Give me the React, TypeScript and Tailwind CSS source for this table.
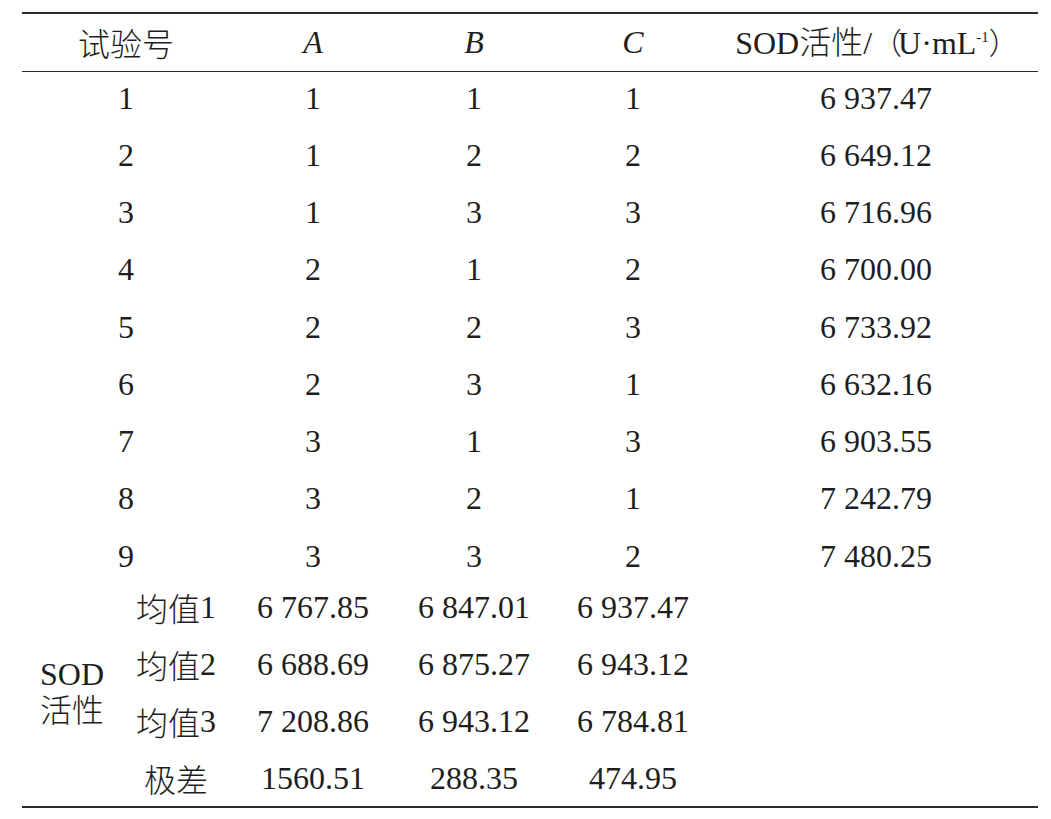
import React from "react";

const rows = [
  ["1", "1", "1", "1", "6\u0020937.47"],
  ["2", "1", "2", "2", "6\u0020649.12"],
  ["3", "1", "3", "3", "6\u0020716.96"],
  ["4", "2", "1", "2", "6\u0020700.00"],
  ["5", "2", "2", "3", "6\u0020733.92"],
  ["6", "2", "3", "1", "6\u0020632.16"],
  ["7", "3", "1", "3", "6\u0020903.55"],
  ["8", "3", "2", "1", "7\u0020242.79"],
  ["9", "3", "3", "2", "7\u0020480.25"],
];

const stats = [
  ["均值", "1", "6\u0020767.85", "6\u0020847.01", "6\u0020937.47"],
  ["均值", "2", "6\u0020688.69", "6\u0020875.27", "6\u0020943.12"],
  ["均值", "3", "7\u0020208.86", "6\u0020943.12", "6\u0020784.81"],
  ["极差", "", "1560.51", "288.35", "474.95"],
];

const serif = "font-['Liberation_Serif',serif]";
const cjk = "font-['Noto_Sans_CJK_SC',sans-serif] font-light";

function App() {
  return (
    <div className="w-[1051px] h-[819px] bg-white pt-[12px] px-[22px] text-[32px] text-[#1e1e1e] font-['Liberation_Serif',serif]">
      <div className="w-[1016px] border-t-2 border-b-2 border-[#2a2a2a]">
        {/* header */}
        <div className="grid grid-cols-[208px_166px_156px_162px_1fr] h-[58px] items-center text-center border-b border-[#2a2a2a] leading-none pb-[2px]">
          <div className={cjk}>试验号</div>
          <div className={`${serif} italic`}>A</div>
          <div className={`${serif} italic`}>B</div>
          <div className={`${serif} italic`}>C</div>
          <div className="whitespace-nowrap pl-[2px]">
            <span className={serif}>SOD</span>
            <span className={cjk}>活性</span>
            <span className={serif}>/</span>
            <span className={`${cjk} text-[30px] -mr-[4px]`}>（</span>
            <span className={serif}>U·mL</span>
            <span className={`${serif} text-[15px] relative -top-[12px]`}>-1</span>
            <span className={`${cjk} text-[30px]`}>）</span>
          </div>
        </div>

        {/* data rows */}
        {rows.map((r, i) => (
          <div key={i} className="grid grid-cols-[208px_166px_156px_162px_1fr] h-[57.25px] items-center text-center leading-none pb-[6px]">
            {r.map((c, j) => (
              <div key={j} className={`${serif} whitespace-nowrap`}>{c}</div>
            ))}
          </div>
        ))}

        {/* SOD activity summary */}
        <div className="grid grid-cols-[100px_108px_166px_156px_162px_1fr] -mt-[9px] text-center leading-none">
          <div className="row-span-4 flex flex-col items-center justify-center gap-[2px] pb-[2px]">
            <span className={`${serif} leading-none`}>SOD</span>
            <span className={`${cjk} leading-none`}>活性</span>
          </div>
          {stats.map((s, i) => (
            <React.Fragment key={i}>
              <div className="h-[57px] flex items-center justify-center whitespace-nowrap">
                <span className={cjk}>{s[0]}</span>
                {s[1] && <span className={serif}>{s[1]}</span>}
              </div>
              <div className={`${serif} h-[57px] flex items-center justify-center whitespace-nowrap`}>{s[2]}</div>
              <div className={`${serif} h-[57px] flex items-center justify-center whitespace-nowrap`}>{s[3]}</div>
              <div className={`${serif} h-[57px] flex items-center justify-center whitespace-nowrap`}>{s[4]}</div>
              <div className="h-[57px]" />
            </React.Fragment>
          ))}
        </div>
      </div>
    </div>
  );
}

export default App;
